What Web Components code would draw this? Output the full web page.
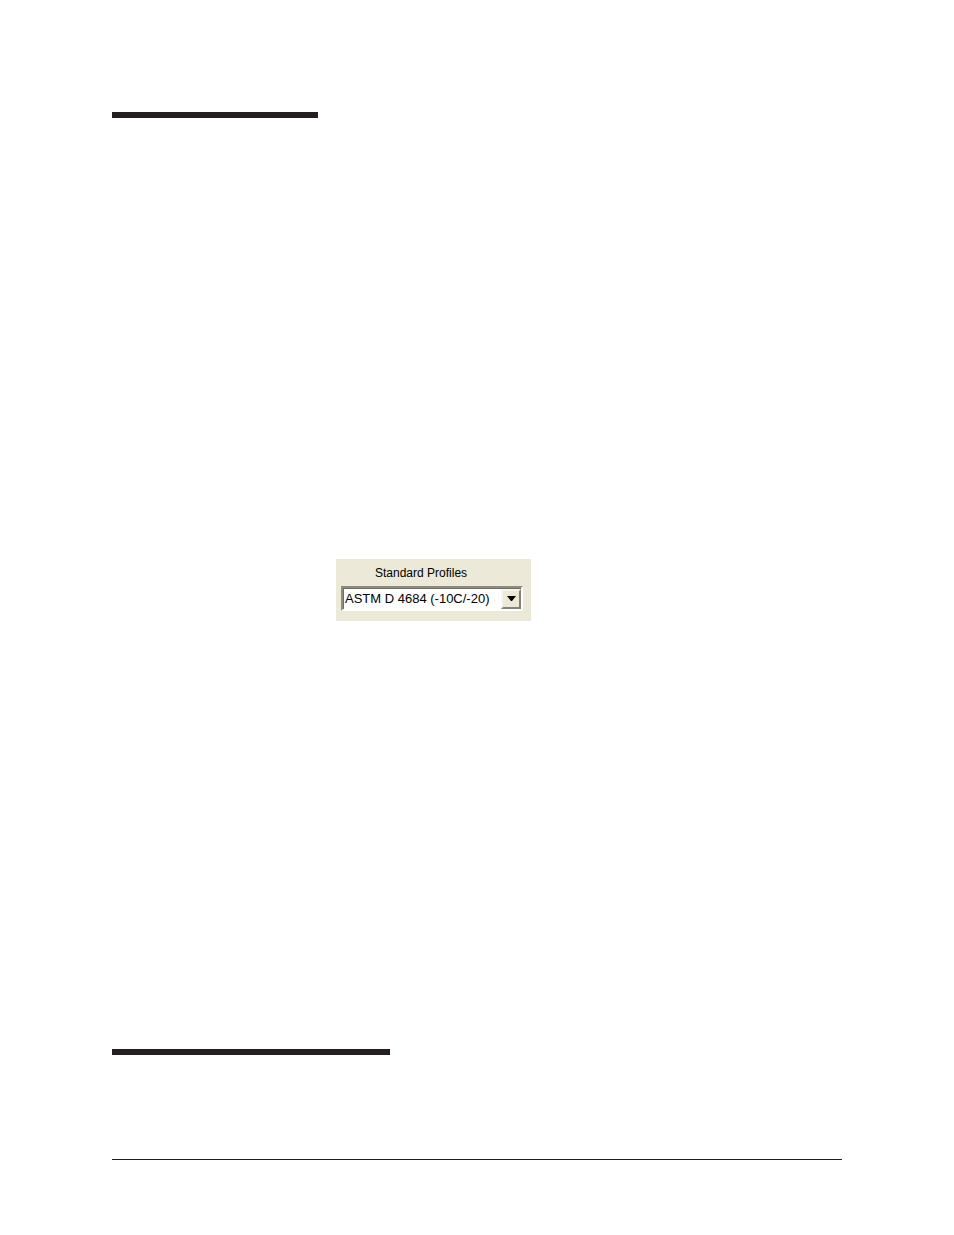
<!DOCTYPE html>
<html lang="en">
<head>
  <meta charset="UTF-8">
  <meta name="viewport" content="width=device-width, initial-scale=1">
  <title>Standard Profiles</title>
  <style>
    body {
      margin: 0;
      background-color: #fff;
      color: #000;
      font-family: "Liberation Sans", Arial, sans-serif;
    }

    .opening {
      flex: 1;
    }

    .closing {
      min-height: 110px;
    }

    .closing section-bar {
      --bar-width: 278px;
    }

    profile-panel {
      margin: 441px 0 40px 224px;
    }
  </style>
</head>
<body>
  <manual-page>
    <section class="opening">
      <section-bar></section-bar>
      <profile-panel label="Standard Profiles">
        <option>ASTM D 4684 (-10C/-20)</option>
      </profile-panel>
    </section>
    <section class="closing">
      <section-bar></section-bar>
    </section>
  </manual-page>

  <script>
    class ManualPage extends HTMLElement {
      constructor() {
        super();
        this.shadowDOM = this.attachShadow({ mode: 'open' });
      }

      connectedCallback() {
        this.shadowDOM.innerHTML = `
          <style>
            :host {
              display: flex;
              flex-direction: column;
              box-sizing: border-box;
              min-height: 100vh;
              padding: 112px 112px 75px;
            }

            main {
              display: flex;
              flex: 1;
              flex-direction: column;
            }

            footer {
              border-top: 1px solid #231f20;
            }
          </style>
          <main><slot></slot></main>
          <footer></footer>
        `;
      }
    }

    class SectionBar extends HTMLElement {
      constructor() {
        super();
        this.shadowDOM = this.attachShadow({ mode: 'open' });
      }

      connectedCallback() {
        this.shadowDOM.innerHTML = `
          <style>
            :host {
              display: block;
              width: var(--bar-width, 206px);
              max-width: 100%;
              height: 6px;
              background-color: #231f20;
            }
          </style>
        `;
      }
    }

    class ProfilePanel extends HTMLElement {
      constructor() {
        super();
        this.shadowDOM = this.attachShadow({ mode: 'open' });
      }

      connectedCallback() {
        this.shadowDOM.innerHTML = `
          <style>
            :host {
              display: block;
              box-sizing: border-box;
              width: 195px;
              height: 62px;
              padding: 6px 8px 10px 5px;
              background-color: #ece9d8;
            }

            label {
              display: block;
              padding-left: 34px;
              margin-bottom: 5px;
              font-size: 12px;
              line-height: 16px;
            }

            .combo {
              display: grid;
              align-items: center;
            }

            select, .arrow {
              grid-area: 1 / 1;
            }

            select {
              appearance: none;
              box-sizing: border-box;
              width: 100%;
              height: 25px;
              margin: 0;
              padding: 0 20px 0 2px;
              border: 2px solid;
              border-color: #8f8c7e #fff #fff #8f8c7e;
              border-radius: 0;
              background-color: #fff;
              box-shadow: inset 1px 1px #716f64;
              color: #000;
              font: 13px "Liberation Sans", Arial, sans-serif;
            }

            .arrow {
              display: grid;
              place-items: center;
              justify-self: end;
              box-sizing: border-box;
              width: 20px;
              height: 20px;
              margin-right: 2px;
              border: 2px solid;
              border-color: #f8f6ee #85826f #85826f #f8f6ee;
              background-color: #ece9d8;
              pointer-events: none;
            }
          </style>
          <label for="profile">${this.getAttribute('label')}</label>
          <div class="combo">
            <select id="profile"></select>
            <span class="arrow">
              <svg width="9" height="5" viewBox="0 0 9 5" aria-hidden="true">
                <path d="M0 0h9L5 5H4z"/>
              </svg>
            </span>
          </div>
        `;
        // a select only lists options that are its own children
        this.shadowDOM.querySelector('select').append(...this.querySelectorAll('option'));
      }
    }

    customElements.define('manual-page', ManualPage);
    customElements.define('section-bar', SectionBar);
    customElements.define('profile-panel', ProfilePanel);
  </script>
</body>
</html>
